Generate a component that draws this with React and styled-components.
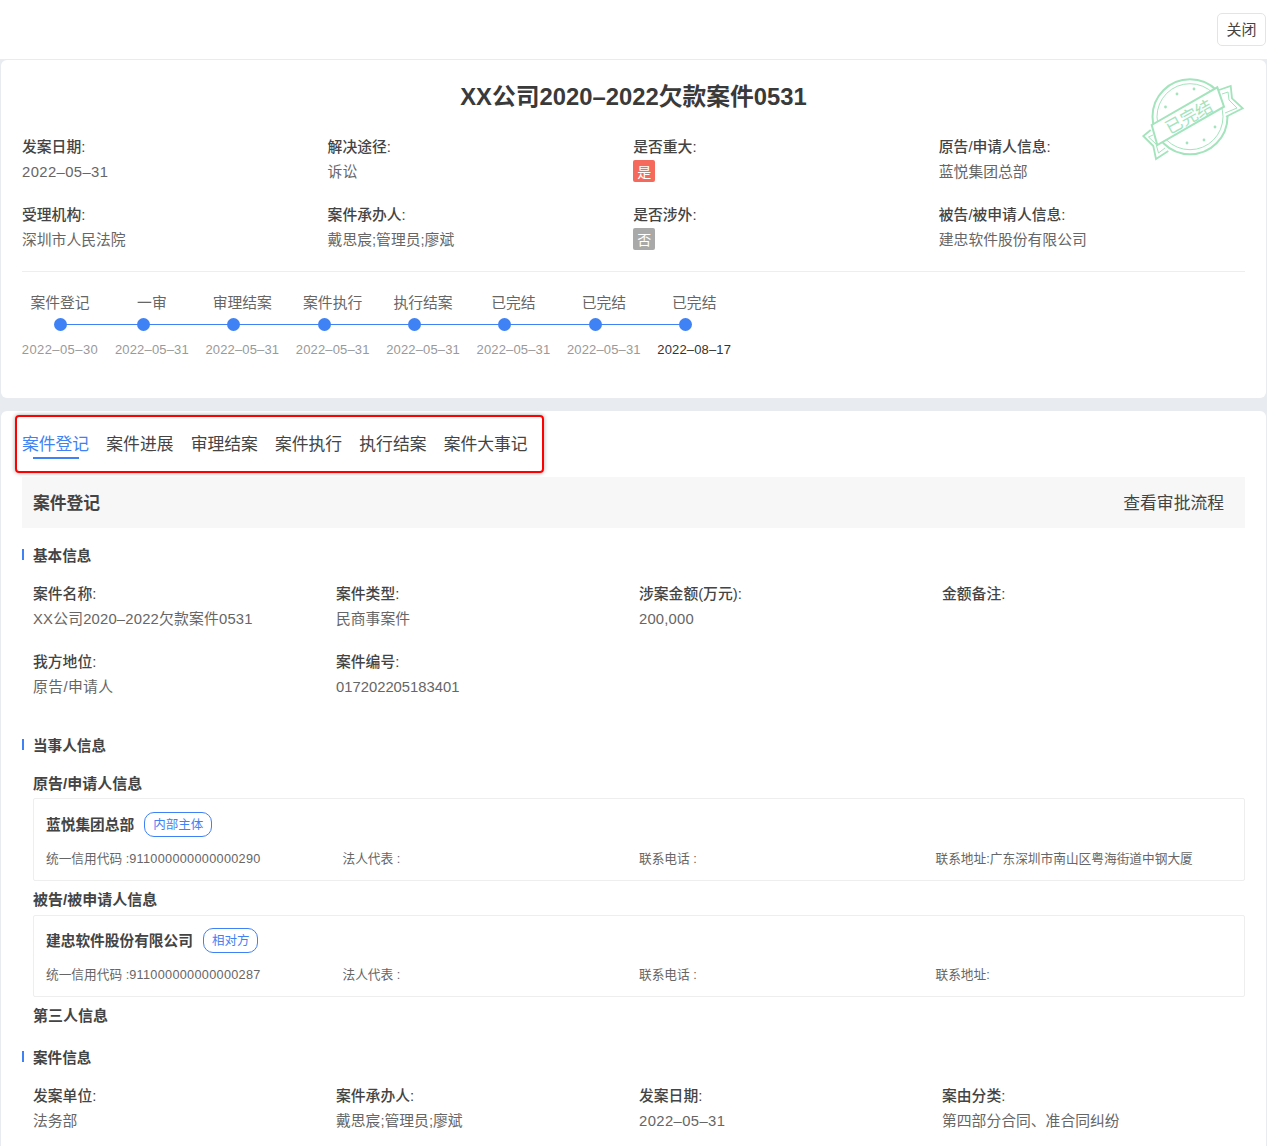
import React from 'react';
import styled, { createGlobalStyle } from 'styled-components';

const FONT = `"Liberation Sans", "Noto Sans CJK SC", sans-serif`;
const BLUE = '#3f82f5';
const STAMP = '#a3e4bc';

const headFields = [
  { label: '发案日期:', value: '2022–05–31', spread: 0.4 },
  { label: '解决途径:', value: '诉讼' },
  { label: '是否重大:', flag: '是', danger: true },
  { label: '原告/申请人信息:', value: '蓝悦集团总部' },
  { label: '受理机构:', value: '深圳市人民法院' },
  { label: '案件承办人:', value: '戴思宸;管理员;廖斌' },
  { label: '是否涉外:', flag: '否' },
  { label: '被告/被申请人信息:', value: '建忠软件股份有限公司' },
];

const steps = [
  { name: '案件登记', date: '2022–05–30', first: true },
  { name: '一审', date: '2022–05–31' },
  { name: '审理结案', date: '2022–05–31' },
  { name: '案件执行', date: '2022–05–31' },
  { name: '执行结案', date: '2022–05–31' },
  { name: '已完结', date: '2022–05–31' },
  { name: '已完结', date: '2022–05–31' },
  { name: '已完结', date: '2022–08–17', current: true },
];

const tabs = ['案件登记', '案件进展', '审理结案', '案件执行', '执行结案', '案件大事记'];

const baseFields = [
  { label: '案件名称:', value: 'XX公司2020–2022欠款案件0531', spread: 0.2 },
  { label: '案件类型:', value: '民商事案件' },
  { label: '涉案金额(万元):', value: '200,000', spread: 0.2 },
  { label: '金额备注:', value: '' },
  { label: '我方地位:', value: '原告/申请人', spread: 0.4 },
  { label: '案件编号:', value: '017202205183401' },
];

const caseFields = [
  { label: '发案单位:', value: '法务部' },
  { label: '案件承办人:', value: '戴思宸;管理员;廖斌' },
  { label: '发案日期:', value: '2022–05–31', spread: 0.4 },
  { label: '案由分类:', value: '第四部分合同、准合同纠纷' },
];

const Stamp = () => (
  <StampSvg viewBox="0 0 110 90" width="110" height="90">
    <g fill="none" stroke={STAMP}>
      <circle cx="50" cy="41.7" r="37.5" strokeWidth="2" />
      <circle cx="50" cy="41.7" r="33" strokeWidth="1" />
      <path d="M79 15 L90.7 11 L92 23.3 L102.7 33.3 L86 41.7" strokeWidth="1.8" fill="#fff" />
      <path d="M82 19 L88 17 L89 25 L97 33 L85 38" strokeWidth="1" />
      <path d="M10.7 55 L3.3 61 L13.3 71 L16 84 L28.3 76" strokeWidth="1.8" fill="#fff" />
      <path d="M13 60 L8.5 62 L16 69 L18.5 78 L25 73" strokeWidth="1" />
      <path d="M11.7 50 L77.3 12.3 L84 31.7 L17.3 70 Z" strokeWidth="2" fill="#fff" />
    </g>
    <g fill={STAMP}>
      <circle cx="37" cy="19" r="1.4" />
      <circle cx="54" cy="14" r="1.4" />
      <circle cx="25.500" cy="32" r="1.4" />
      <circle cx="75" cy="52" r="1.4" />
      <circle cx="64" cy="65" r="1.4" />
      <circle cx="47" cy="68" r="1.4" />
    </g>
    <StampText x="49" y="48" textAnchor="middle" transform="rotate(-29 49 42)">
      已完结
    </StampText>
  </StampSvg>
);

const FieldGrid = ({ items }) => (
  <Fields>
    {items.map(item => (
      <Field key={item.label}>
        <Label>{item.label}</Label>
        <Value $spread={item.spread}>{item.value}</Value>
      </Field>
    ))}
  </Fields>
);

const Party = ({ name, tag, code, address, top, tall }) => (
  <PartyBox $top={top} $tall={tall}>
    <PartyHead>
      <PartyName>{name}</PartyName>
      <PartyTag>{tag}</PartyTag>
    </PartyHead>
    <PartyInfo>
      <span>
        统一信用代码 :<Code>{code}</Code>
      </span>
      <span>法人代表 :</span>
      <span>联系电话 :</span>
      <span>联系地址:{address}</span>
    </PartyInfo>
  </PartyBox>
);

const App = () => {
  return (
    <Page>
      <GlobalStyle />
      <TopBar>
        <CloseButton>关闭</CloseButton>
      </TopBar>
      <Summary>
        <Stamp />
        <Title>XX公司2020–2022欠款案件0531</Title>
        <HeadFields>
          {headFields.map(item => (
            <Field key={item.label}>
              <Label>{item.label}</Label>
              {item.flag ? (
                <FlagRow>
                  <Flag $danger={item.danger}>{item.flag}</Flag>
                </FlagRow>
              ) : (
                <Value $spread={item.spread}>{item.value}</Value>
              )}
            </Field>
          ))}
        </HeadFields>
        <Divider />
        <Timeline>
          <Track />
          {steps.map((step, i) => (
            <Step key={i} $first={step.first}>
              <StepName>{step.name}</StepName>
              <Dot $first={step.first} />
              <StepDate $current={step.current} $first={step.first}>
                {step.date}
              </StepDate>
            </Step>
          ))}
        </Timeline>
      </Summary>
      <Detail>
        <TabFrame>
          {tabs.map((tab, i) => (
            <Tab key={tab} $active={i === 0}>
              {tab}
            </Tab>
          ))}
        </TabFrame>
        <PanelHead>
          <PanelTitle>案件登记</PanelTitle>
          <PanelLink>查看审批流程</PanelLink>
        </PanelHead>

        <SectionTitle $gap={18}>基本信息</SectionTitle>
        <FieldGrid items={baseFields} />

        <SectionTitle $gap={37}>当事人信息</SectionTitle>
        <SubTitle $gap={18}>原告/申请人信息</SubTitle>
        <Party
          name="蓝悦集团总部"
          tag="内部主体"
          code="911000000000000290"
          address="广东深圳市南山区粤海街道中钢大厦"
          top={13}
          tall
        />
        <SubTitle $gap={9} $after={5}>
          被告/被申请人信息
        </SubTitle>
        <Party name="建忠软件股份有限公司" tag="相对方" code="911000000000000287" address="" top={12} />
        <ThirdTitle>第三人信息</ThirdTitle>

        <SectionTitle $gap={22}>案件信息</SectionTitle>
        <FieldGrid items={caseFields} />
      </Detail>
    </Page>
  );
};

const GlobalStyle = createGlobalStyle`
  html, body {
    margin: 0;
    padding: 0;
    background: #e8ecf0;
    font-family: ${FONT};
  }
  * {
    box-sizing: border-box;
  }
`;

const Page = styled.div`
  width: 1267px;
  height: 1146px;
  overflow: hidden;
  background: #e8ecf0;
`;
const TopBar = styled.div`
  display: flex;
  justify-content: flex-end;
  align-items: flex-start;
  height: 59px;
  padding: 13px 1px 0 0;
  background: #fff;
`;
const CloseButton = styled.button`
  width: 49px;
  height: 33px;
  padding: 0 0 2px;
  border: 1.5px solid #e4e4e4;
  border-radius: 5px;
  background: #fff;
  color: #444;
  font-family: ${FONT};
  font-size: 15px;
`;
const Summary = styled.section`
  position: relative;
  height: 338px;
  margin: 1px 1px 0;
  padding: 20px 21px 0;
  background: #fff;
  border-radius: 6px;
`;
const StampSvg = styled.svg`
  position: absolute;
  top: 15px;
  right: 16px;
`;
const StampText = styled.text`
  fill: ${STAMP};
  font-family: ${FONT};
  font-size: 17px;
`;
const Title = styled.h1`
  margin: 0;
  color: #3a3a3a;
  font-size: 23.8px;
  font-weight: 700;
  line-height: 34px;
  text-align: center;
`;
const HeadFields = styled.div`
  display: grid;
  grid-template-columns: repeat(4, 305.6px);
  row-gap: 21px;
  margin-top: 23px;
`;
const Field = styled.div`
  min-height: 47px;
`;
const Label = styled.div`
  color: #444;
  font-size: 14.8px;
  font-weight: 500;
  line-height: 20px;
`;
const Value = styled.div`
  margin-top: 3px;
  color: #666;
  font-size: 14.8px;
  line-height: 24px;
  letter-spacing: ${props => props.$spread || 0}px;
`;
const FlagRow = styled.div`
  margin-top: 3px;
  height: 24px;
`;
const Flag = styled.span`
  display: flex;
  align-items: center;
  justify-content: center;
  width: 22px;
  height: 22px;
  border-radius: 2px;
  background: ${props => (props.$danger ? '#f5695c' : '#a9a9a9')};
  color: #fff;
  font-size: 14px;
`;
const Divider = styled.div`
  height: 1px;
  margin-top: 19px;
  background: #eeeeee;
`;
const Timeline = styled.div`
  position: relative;
  display: flex;
  gap: 17.4px;
  margin-top: 21px;
`;
const Track = styled.div`
  position: absolute;
  top: 31px;
  left: 38px;
  width: 625px;
  height: 1px;
  background: ${BLUE};
`;
const Step = styled.div`
  display: flex;
  flex-direction: column;
  align-items: center;
  flex: none;
  width: ${props => (props.$first ? '76px' : '73px')};
`;
const StepName = styled.div`
  color: #666;
  font-size: 14.8px;
  line-height: 20px;
  white-space: nowrap;
`;
const Dot = styled.span`
  position: relative;
  width: 13px;
  height: 13px;
  margin-top: 5px;
  margin-right: ${props => (props.$first ? '0' : '17px')};
  border-radius: 50%;
  background: ${BLUE};
`;
const StepDate = styled.div`
  margin-top: 10px;
  color: ${props => (props.$current ? '#333' : '#999')};
  font-size: 13px;
  line-height: 18px;
  letter-spacing: ${props => (props.$first ? '0.4px' : '0.15px')};
  white-space: nowrap;
`;
const Detail = styled.section`
  height: 735px;
  margin: 13px 1px 0;
  padding: 4px 21px 0;
  background: #fff;
  border-radius: 6px 6px 0 0;
`;
const TabFrame = styled.div`
  display: flex;
  align-items: center;
  gap: 17.2px;
  width: 529px;
  height: 58px;
  margin-left: -7px;
  padding: 2px 0 0 5px;
  border: 2px solid #f00;
  border-radius: 4px;
  box-shadow: 0 0 4px rgba(0, 0, 0, 0.35);
`;
const Tab = styled.div`
  position: relative;
  color: ${props => (props.$active ? BLUE : '#444')};
  font-size: 16.8px;
  line-height: 24px;
  white-space: nowrap;

  &::after {
    content: '';
    display: ${props => (props.$active ? 'block' : 'none')};
    position: absolute;
    left: 11px;
    right: 10px;
    bottom: -2px;
    height: 2px;
    background: ${BLUE};
  }
`;
const PanelHead = styled.div`
  display: flex;
  align-items: center;
  justify-content: space-between;
  height: 51px;
  margin-top: 4px;
  padding: 0 21px 2px 11px;
  background: #f7f7f7;
`;
const PanelTitle = styled.div`
  color: #444;
  font-size: 16.8px;
  font-weight: 700;
`;
const PanelLink = styled.div`
  color: #444;
  font-size: 16.8px;
`;
const SectionTitle = styled.h3`
  position: relative;
  margin: ${props => props.$gap}px 0 0;
  padding-left: 11px;
  color: #444;
  font-size: 14.6px;
  font-weight: 700;
  line-height: 20px;

  &::before {
    content: '';
    position: absolute;
    left: 0;
    top: 3px;
    width: 2px;
    height: 11px;
    background: ${BLUE};
  }
`;
const Fields = styled.div`
  display: grid;
  grid-template-columns: repeat(4, 303px);
  row-gap: 21px;
  margin-top: 18px;
  padding-left: 11px;
`;
const SubTitle = styled.h4`
  margin: ${props => props.$gap}px 0 ${props => props.$after || 4}px;
  padding-left: 11px;
  color: #444;
  font-size: 15px;
  font-weight: 700;
  line-height: 20px;
`;
const ThirdTitle = styled(SubTitle)`
  margin: 9px 0 0;
`;
const PartyBox = styled.div`
  height: ${props => (props.$tall ? '83px' : '82px')};
  margin-left: 11px;
  padding: ${props => props.$top}px 12px 0;
  border: 1px solid #eeeeee;
  border-radius: 2px;
`;
const PartyHead = styled.div`
  display: flex;
  align-items: center;
  gap: 10px;
  height: 25px;
`;
const PartyName = styled.div`
  padding-bottom: 2px;
  color: #444;
  font-size: 14.7px;
  font-weight: 700;
`;
const PartyTag = styled.span`
  padding: 1px 8px 0;
  border: 1px solid ${BLUE};
  border-radius: 10px;
  color: ${BLUE};
  font-size: 12.5px;
  line-height: 22px;
`;
const PartyInfo = styled.div`
  display: grid;
  grid-template-columns: repeat(4, 296.5px);
  margin-top: 12px;
  color: #666;
  font-size: 12.7px;
  line-height: 20px;
  white-space: nowrap;
`;
const Code = styled.span`
  letter-spacing: 0.3px;
`;

export default App;
